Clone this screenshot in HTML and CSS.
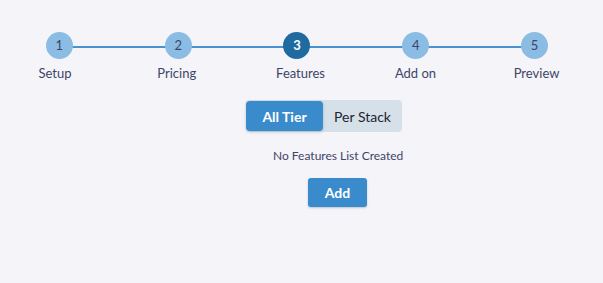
FILE: index.html
```html
<!DOCTYPE html>
<html lang="en">
<head>
<meta charset="utf-8">
<title>Features</title>
<link rel="stylesheet" href="styles.css">
</head>
<body>
<div class="page">
  <ol class="stepper">
    <li class="step done"><span class="dot">1</span><span class="label">Setup</span></li>
    <li class="step done"><span class="dot">2</span><span class="label">Pricing</span></li>
    <li class="step current"><span class="dot">3</span><span class="label">Features</span></li>
    <li class="step"><span class="dot">4</span><span class="label">Add on</span></li>
    <li class="step last"><span class="dot">5</span><span class="label">Preview</span></li>
  </ol>
  <div class="content">
    <div class="toggle">
      <button class="tab active">All Tier</button>
      <button class="tab">Per Stack</button>
    </div>
    <p class="empty">No Features List Created</p>
    <button class="add">Add</button>
  </div>
</div>
</body>
</html>
```
FILE: styles.css
```css
html, body {
  margin: 0;
  padding: 0;
  background: #f4f4f9;
  font-family: Lato, "Noto Sans", sans-serif;
  color: #3f4468;
}
.page {
  width: 603px;
  height: 283px;
}
.stepper {
  list-style: none;
  margin: 0;
  padding: 32px 0 0 0;
  width: 594px;
  display: grid;
  grid-template-columns: repeat(5, 1fr);
}
.step {
  position: relative;
  display: flex;
  flex-direction: column;
  align-items: center;
}
.step::after {
  content: "";
  position: absolute;
  top: 14px;
  left: 50%;
  width: 100%;
  height: 2px;
  background: #4b93d0;
  z-index: 0;
}
.step.last::after {
  display: none;
}
.dot {
  position: relative;
  z-index: 1;
  width: 27px;
  height: 27px;
  border-radius: 50%;
  background: #8bbde4;
  color: #3f4468;
  font-size: 13px;
  line-height: 27px;
  text-align: center;
}
.current .dot {
  background: #1e6aa1;
  color: #ffffff;
  font-weight: 700;
}
.label {
  align-self: flex-start;
  margin: 6px 0 0 38.5px;
  font-size: 13px;
  line-height: 16px;
  color: #3f4468;
  white-space: nowrap;
}
.content {
  display: flex;
  flex-direction: column;
  align-items: flex-start;
  padding-top: 19px;
}
.toggle {
  margin-left: 246px;
  display: flex;
  background: #d6e0e8;
  border-radius: 4px;
  height: 32px;
  width: 156px;
  padding: 1px 0;
  box-sizing: border-box;
}
.tab {
  border: none;
  background: transparent;
  font-family: Lato, "Noto Sans", sans-serif;
  font-size: 14px;
  color: #22252f;
  padding: 0;
  height: 30px;
  cursor: pointer;
}
.tab:first-child {
  width: 77px;
}
.tab:last-child {
  flex: 1;
}
.tab.active {
  background: #3a8bcb;
  color: #ffffff;
  font-weight: 700;
  border-radius: 4px;
  box-shadow: 0 1px 3px rgba(40, 60, 90, 0.25);
}
.empty {
  margin: 17px 0 0 273px;
  font-size: 12px;
  line-height: 14px;
  color: #3f4468;
}
.add {
  margin: 15px 0 0 308px;
  width: 59px;
  height: 29px;
  border: none;
  border-radius: 3px;
  background: #3a8bcb;
  color: #ffffff;
  font-family: Lato, "Noto Sans", sans-serif;
  font-size: 14px;
  font-weight: 700;
  box-shadow: 0 1px 2px rgba(40, 60, 90, 0.25);
  cursor: pointer;
}
```
